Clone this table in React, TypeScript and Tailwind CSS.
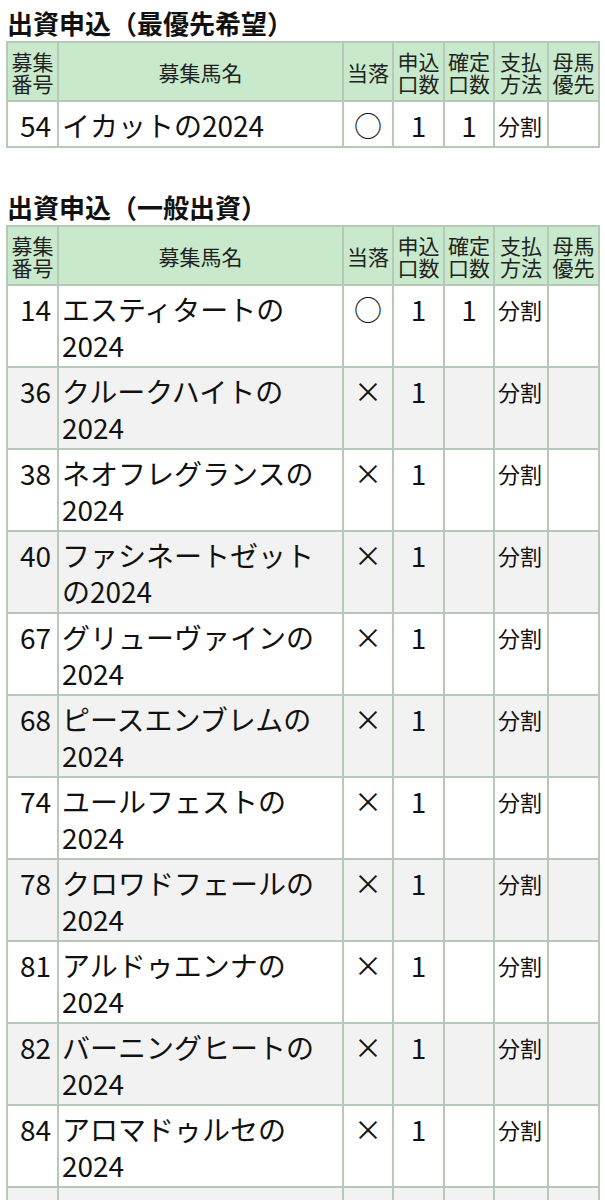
import React from "react";

interface Entry {
  no: number;
  name: string[];
  result: string;
  applied: string;
  confirmed: string;
  payment: string;
}

const priorityEntries: Entry[] = [
  { no: 54, name: ["イカットの2024"], result: "○", applied: "1", confirmed: "1", payment: "分割" },
];

const generalEntries: Entry[] = [
  { no: 14, name: ["エスティタートの", "2024"], result: "○", applied: "1", confirmed: "1", payment: "分割" },
  { no: 36, name: ["クルークハイトの", "2024"], result: "×", applied: "1", confirmed: "", payment: "分割" },
  { no: 38, name: ["ネオフレグランスの", "2024"], result: "×", applied: "1", confirmed: "", payment: "分割" },
  { no: 40, name: ["ファシネートゼット", "の2024"], result: "×", applied: "1", confirmed: "", payment: "分割" },
  { no: 67, name: ["グリューヴァインの", "2024"], result: "×", applied: "1", confirmed: "", payment: "分割" },
  { no: 68, name: ["ピースエンブレムの", "2024"], result: "×", applied: "1", confirmed: "", payment: "分割" },
  { no: 74, name: ["ユールフェストの", "2024"], result: "×", applied: "1", confirmed: "", payment: "分割" },
  { no: 78, name: ["クロワドフェールの", "2024"], result: "×", applied: "1", confirmed: "", payment: "分割" },
  { no: 81, name: ["アルドゥエンナの", "2024"], result: "×", applied: "1", confirmed: "", payment: "分割" },
  { no: 82, name: ["バーニングヒートの", "2024"], result: "×", applied: "1", confirmed: "", payment: "分割" },
  { no: 84, name: ["アロマドゥルセの", "2024"], result: "×", applied: "1", confirmed: "", payment: "分割" },
  { no: 86, name: ["アマルフィコーストの", "2024"], result: "×", applied: "1", confirmed: "", payment: "分割" },
];

const th = "border-2 border-[#b6c9b9] bg-[#c8e9cc] text-[21px] leading-[22px] font-normal text-[#222] pt-[7px] pb-[6px] text-center align-middle";
const td = "border-2 border-[#b6c9b9] align-top pt-[5px] pb-[3px] leading-[36px]";

function EntryTable({ entries, striped }: { entries: Entry[]; striped: boolean }) {
  return (
    <table className="table-fixed border-collapse w-[592px]">
      <colgroup>
        <col className="w-[51px]" />
        <col className="w-[285px]" />
        <col className="w-[50px]" />
        <col className="w-[51px]" />
        <col className="w-[50px]" />
        <col className="w-[54px]" />
        <col className="w-[51px]" />
      </colgroup>
      <thead>
        <tr>
          <th className={th}>募集<br />番号</th>
          <th className={th}>募集馬名</th>
          <th className={th}>当落</th>
          <th className={th}>申込<br />口数</th>
          <th className={th}>確定<br />口数</th>
          <th className={th}>支払<br />方法</th>
          <th className={th}>母馬<br />優先</th>
        </tr>
      </thead>
      <tbody>
        {entries.map((e, i) => (
          <tr key={e.no} className={striped && i % 2 === 1 ? "bg-[#f2f2f2]" : "bg-white"}>
            <td className={`${td} text-[28px] text-right pr-[6px]`}>{e.no}</td>
            <td className={`${td} text-[28px] pl-[3px]`}>
              {e.name.map((line, j) => (
                <div key={j}>{line}</div>
              ))}
            </td>
            <td className={`${td} text-[28px] text-center`}>{e.result}</td>
            <td className={`${td} text-[28px] text-center`}>{e.applied}</td>
            <td className={`${td} text-[28px] text-center`}>{e.confirmed}</td>
            <td className={`${td} text-[22px] pl-[3px]`}>{e.payment}</td>
            <td className={td}></td>
          </tr>
        ))}
      </tbody>
    </table>
  );
}

export default function App() {
  return (
    <div
      className="min-h-screen bg-white text-[#111] px-[6px] pt-[5px]"
      style={{ fontFamily: '"Noto Sans CJK JP", "Noto Sans", sans-serif' }}
    >
      <h2 className="text-[26px] leading-[36px] font-bold pl-[1px]">出資申込（最優先希望）</h2>
      <EntryTable entries={priorityEntries} striped={false} />

      <h2 className="text-[26px] leading-[36px] font-bold pl-[1px] mt-[41px]">出資申込（一般出資）</h2>
      <EntryTable entries={generalEntries} striped={true} />
    </div>
  );
}
